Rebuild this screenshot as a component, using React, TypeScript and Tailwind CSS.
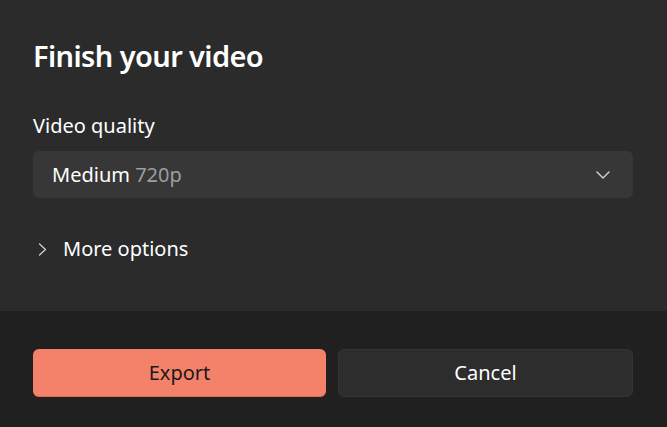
import React from "react";

const font = { fontFamily: '"Noto Sans", "Open Sans", sans-serif' };

function ChevronDown() {
  return (
    <svg width="14" height="8" viewBox="0 0 14 8" fill="none">
      <path d="M1 1l6 6 6-6" stroke="#d6d6d6" strokeWidth="1.4" strokeLinecap="round" strokeLinejoin="round" />
    </svg>
  );
}

function ChevronRight() {
  return (
    <svg width="9" height="13" viewBox="0 0 9 13" fill="none">
      <path d="M1.5 1l6 5.5-6 5.5" stroke="#d6d6d6" strokeWidth="1.2" strokeLinecap="round" strokeLinejoin="round" />
    </svg>
  );
}

export default function App() {
  return (
    <div className="w-[667px] h-[427px] flex flex-col bg-[#2b2b2b] text-white overflow-hidden" style={font}>
      {/* content */}
      <div className="flex-1 flex flex-col pl-[33px] pr-[34px] pt-[36px]">
        <h1 className="text-[29px] leading-[40px] font-semibold tracking-[-0.6px]">Finish your video</h1>

        <div className="mt-[36px] text-[20px] leading-[28px]">Video quality</div>

        <button className="mt-[11px] h-[47px] w-full rounded-[6px] bg-[#373737] flex items-center justify-between pl-[19px] pr-[23px] text-[20px]">
          <span>
            Medium <span className="text-[#9d9d9d]">720p</span>
          </span>
          <ChevronDown />
        </button>

        <div className="mt-[37px] flex items-center gap-[16px] pl-[5px] text-[20px] leading-[28px]">
          <ChevronRight />
          <span>More options</span>
        </div>
      </div>

      {/* footer */}
      <div className="h-[116px] bg-[#202020] pl-[33px] pr-[34px] pt-[38px] flex gap-[12px]">
        <button className="flex-1 h-[48px] rounded-[6px] bg-[#f4826a] border-b border-[#d86f5b] text-[#1a1a1a] text-[20px]">
          Export
        </button>
        <button className="flex-1 h-[48px] rounded-[6px] bg-[#2d2d2d] border border-[#343434] text-white text-[20px]">
          Cancel
        </button>
      </div>
    </div>
  );
}
